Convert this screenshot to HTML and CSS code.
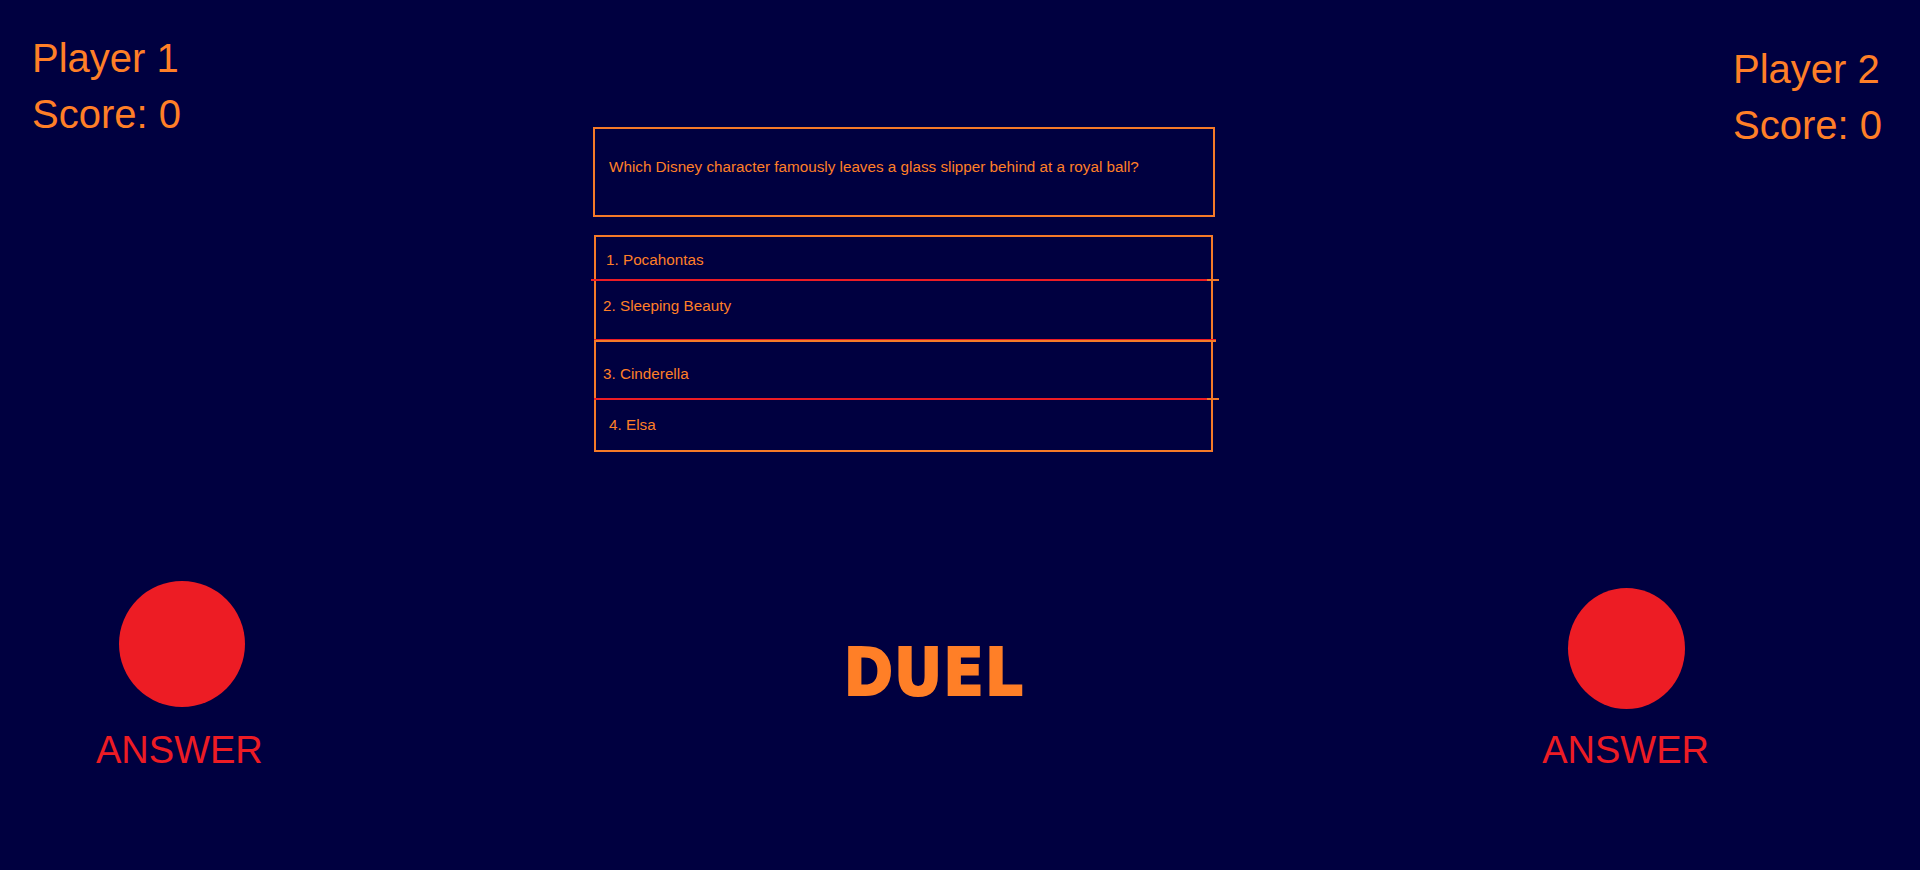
FILE: index.html
```html
<!DOCTYPE html>
<html lang="en">
<head>
<meta charset="utf-8">
<title>Duel</title>
<link rel="stylesheet" href="styles.css">
</head>
<body>
<main class="stage">
  <section class="top">
    <div class="player player--left">
      <div class="player__name">Player 1</div>
      <div class="player__score">Score: 0</div>
    </div>
    <div class="quiz">
      <div class="question">Which Disney character famously leaves a glass slipper behind at a royal ball?</div>
      <div class="answers">
        <div class="answer answer--1">1. Pocahontas</div>
        <div class="sep sep--1"></div>
        <div class="answer answer--2">2. Sleeping Beauty</div>
        <div class="sep sep--2"></div>
        <div class="answer answer--3">3. Cinderella</div>
        <div class="sep sep--3"></div>
        <div class="answer answer--4">4. Elsa</div>
      </div>
    </div>
    <div class="player player--right">
      <div class="player__name">Player 2</div>
      <div class="player__score">Score: 0</div>
    </div>
  </section>
  <section class="bottom">
    <div class="buzzer buzzer--left">
      <div class="buzzer__button"></div>
      <div class="buzzer__label">ANSWER</div>
    </div>
    <div class="title">DUEL</div>
    <div class="buzzer buzzer--right">
      <div class="buzzer__button"></div>
      <div class="buzzer__label">ANSWER</div>
    </div>
  </section>
</main>
</body>
</html>
```

FILE: styles.css
```css
* { box-sizing: border-box; }

html, body {
  margin: 0;
  padding: 0;
  height: 100%;
}

body {
  background: #000040;
  color: #ff7f27;
  font-family: "Liberation Sans", Arial, sans-serif;
  overflow: hidden;
}

.stage {
  width: 1920px;
  height: 870px;
  display: flex;
  flex-direction: column;
}

.top {
  display: flex;
  align-items: flex-start;
  padding: 0 38px 0 32px;
}

.player {
  font-size: 40px;
  line-height: 56px;
  white-space: nowrap;
}

.player--left {
  width: 158px;
  margin-top: 30px;
}

.player--right {
  margin-left: auto;
  margin-top: 41px;
}

.quiz {
  margin-left: 403px;
  margin-top: 127px;
  display: flex;
  flex-direction: column;
}

.question {
  width: 622px;
  height: 90px;
  border: 2px solid #f57a28;
  font-size: 15.25px;
  line-height: 18px;
  padding: 29px 0 0 14px;
  white-space: nowrap;
}

.answers {
  width: 619px;
  margin: 18px 0 0 1px;
  border: 2px solid #f57a28;
  display: flex;
  flex-direction: column;
  font-size: 15.25px;
  line-height: 18px;
}

.answer {
  white-space: nowrap;
}

.answer--1 { height: 42px; padding: 14px 0 0 10px; }
.answer--2 { height: 58px; padding: 16px 0 0 7px; }
.answer--3 { height: 56px; padding: 23px 0 0 7px; }
.answer--4 { height: 50px; padding: 16px 0 0 13px; }

.sep {
  height: 2px;
  background: linear-gradient(90deg, #ed1c24 calc(100% - 12px), #f57a28 calc(100% - 12px));
}

.sep--1 { margin: 0 -8px 0 -5px; }
.sep--2 {
  height: 3px;
  margin: 0 -5px 0 -2px;
  background: linear-gradient(180deg, #ed1c24 50%, #f57a28 50%);
}
.sep--3 { margin: 0 -8px 0 -2px; }

.bottom {
  display: flex;
  align-items: flex-start;
  padding: 0 211px 0 96px;
}

.buzzer {
  display: flex;
  flex-direction: column;
  align-items: flex-start;
}

.buzzer--left {
  margin-top: 129px;
}

.buzzer--right {
  margin-left: auto;
  margin-top: 136px;
}

.buzzer__button {
  background: #ed1c24;
  border-radius: 50%;
}

.buzzer--left .buzzer__button {
  width: 126px;
  height: 126px;
  margin-left: 23px;
}

.buzzer--right .buzzer__button {
  width: 117px;
  height: 121px;
  margin-left: 26px;
}

.buzzer__label {
  color: #ed1c24;
  font-size: 38px;
  line-height: 44px;
  margin-top: 21px;
  white-space: nowrap;
}

.buzzer--right .buzzer__label {
  margin-top: 19px;
}

.title {
  margin-left: 581px;
  margin-top: 186px;
  font-family: "DejaVu Sans Condensed", "DejaVu Sans", sans-serif;
  font-stretch: condensed;
  font-weight: bold;
  font-size: 66px;
  line-height: 70px;
  letter-spacing: 1px;
  color: #ff7f27;
  -webkit-text-stroke: 2px #ff7f27;
}
```
